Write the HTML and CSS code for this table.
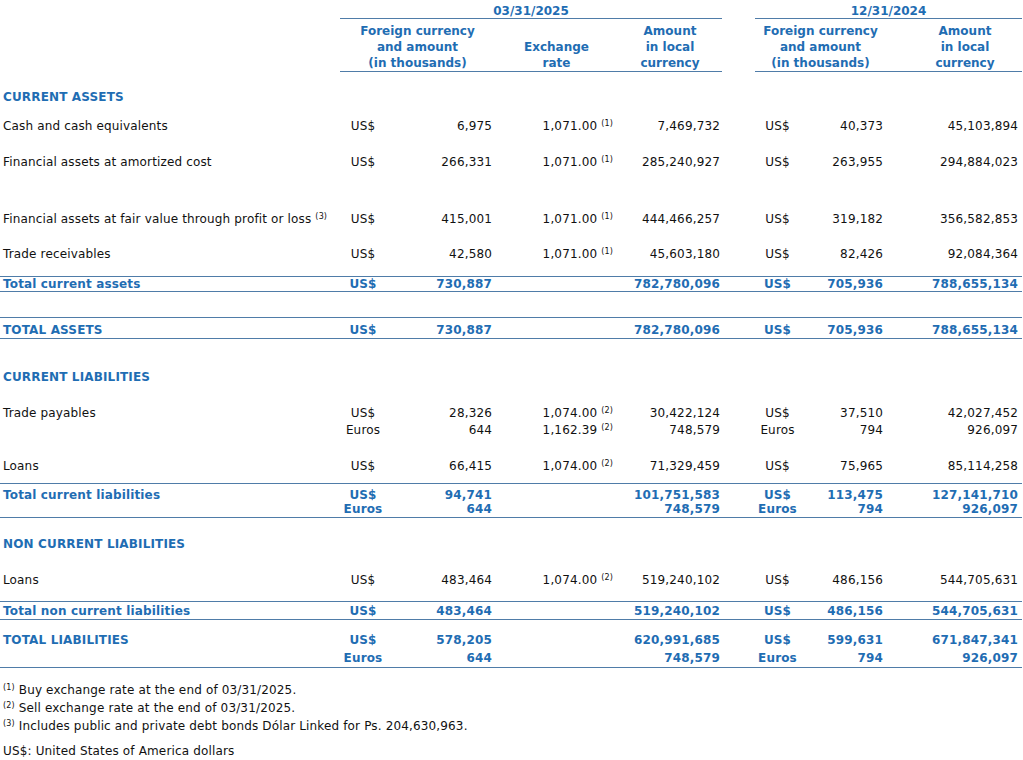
FILE: index.html
```html
<!DOCTYPE html>
<html>
  <head>
    <meta charset="utf-8" />
    <title>Foreign currency assets and liabilities</title>
    <link rel="stylesheet" href="styles.css">
  </head>

  <body>
    <table class="report">
      <colgroup>
        <col class="w-lbl" />
        <col class="w-cur1" />
        <col class="w-amt1" />
        <col class="w-rate" />
        <col class="w-loc1" />
        <col class="w-gap" />
        <col class="w-cur2" />
        <col class="w-amt2" />
        <col class="w-loc2" />
      </colgroup>
      <thead>
        <tr class="date-row">
          <th class="blank"></th>
          <th colspan="4" class="ruled">03/31/2025</th>
          <th class="blank"></th>
          <th colspan="3" class="ruled">12/31/2024</th>
        </tr>
        <tr class="head-row">
          <th class="blank"></th>
          <th colspan="2" class="ruled">Foreign currency<br>and amount<br>(in thousands)</th>
          <th class="ruled">Exchange<br>rate</th>
          <th class="ruled">Amount<br>in local<br>currency</th>
          <th class="blank"></th>
          <th colspan="2" class="ruled">Foreign currency<br>and amount<br>(in thousands)</th>
          <th class="ruled shift">Amount<br>in local<br>currency</th>
        </tr>
      </thead>
      <tbody>
        <tr class="sec r-first">
          <td class="lbl">CURRENT ASSETS</td>
          <td></td><td></td><td></td><td></td><td></td><td></td><td></td><td></td>
        </tr>
        <tr class="r-cash">
          <td class="lbl">Cash and cash equivalents</td>
          <td class="cur">US$</td>
          <td class="num">6,975</td>
          <td class="rate">1,071.00 <sup>(1)</sup></td>
          <td class="loc">7,469,732</td>
          <td></td>
          <td class="cur">US$</td>
          <td class="num">40,373</td>
          <td class="loc2">45,103,894</td>
        </tr>
        <tr class="r-amort">
          <td class="lbl">Financial assets at amortized cost</td>
          <td class="cur">US$</td>
          <td class="num">266,331</td>
          <td class="rate">1,071.00 <sup>(1)</sup></td>
          <td class="loc">285,240,927</td>
          <td></td>
          <td class="cur">US$</td>
          <td class="num">263,955</td>
          <td class="loc2">294,884,023</td>
        </tr>
        <tr class="r-fv">
          <td class="lbl">Financial assets at fair value through profit or loss <sup>(3)</sup></td>
          <td class="cur">US$</td>
          <td class="num">415,001</td>
          <td class="rate">1,071.00 <sup>(1)</sup></td>
          <td class="loc">444,466,257</td>
          <td></td>
          <td class="cur">US$</td>
          <td class="num">319,182</td>
          <td class="loc2">356,582,853</td>
        </tr>
        <tr class="r-rec">
          <td class="lbl">Trade receivables</td>
          <td class="cur">US$</td>
          <td class="num">42,580</td>
          <td class="rate">1,071.00 <sup>(1)</sup></td>
          <td class="loc">45,603,180</td>
          <td></td>
          <td class="cur">US$</td>
          <td class="num">82,426</td>
          <td class="loc2">92,084,364</td>
        </tr>
        <tr class="total boxed">
          <td class="lbl">Total current assets</td>
          <td class="cur">US$</td>
          <td class="num">730,887</td>
          <td class="rate"></td>
          <td class="loc">782,780,096</td>
          <td></td>
          <td class="cur">US$</td>
          <td class="num">705,936</td>
          <td class="loc2">788,655,134</td>
        </tr>
        <tr class="spacer">
          <td></td><td></td><td></td><td></td><td></td><td></td><td></td><td></td><td></td>
        </tr>
        <tr class="total boxed r-tassets">
          <td class="lbl">TOTAL ASSETS</td>
          <td class="cur">US$</td>
          <td class="num">730,887</td>
          <td class="rate"></td>
          <td class="loc">782,780,096</td>
          <td></td>
          <td class="cur">US$</td>
          <td class="num">705,936</td>
          <td class="loc2">788,655,134</td>
        </tr>
        <tr class="sec r-cl">
          <td class="lbl">CURRENT LIABILITIES</td>
          <td></td><td></td><td></td><td></td><td></td><td></td><td></td><td></td>
        </tr>
        <tr class="r-pay">
          <td class="lbl">Trade payables</td>
          <td class="cur">US$<br>Euros</td>
          <td class="num">28,326<br>644</td>
          <td class="rate">1,074.00 <sup>(2)</sup><br>1,162.39 <sup>(2)</sup></td>
          <td class="loc">30,422,124<br>748,579</td>
          <td></td>
          <td class="cur">US$<br>Euros</td>
          <td class="num">37,510<br>794</td>
          <td class="loc2">42,027,452<br>926,097</td>
        </tr>
        <tr class="r-loans">
          <td class="lbl">Loans</td>
          <td class="cur">US$</td>
          <td class="num">66,415</td>
          <td class="rate">1,074.00 <sup>(2)</sup></td>
          <td class="loc">71,329,459</td>
          <td></td>
          <td class="cur">US$</td>
          <td class="num">75,965</td>
          <td class="loc2">85,114,258</td>
        </tr>
        <tr class="total boxed r-tcl">
          <td class="lbl">Total current liabilities</td>
          <td class="cur">US$<br>Euros</td>
          <td class="num">94,741<br>644</td>
          <td class="rate"></td>
          <td class="loc">101,751,583<br>748,579</td>
          <td></td>
          <td class="cur">US$<br>Euros</td>
          <td class="num">113,475<br>794</td>
          <td class="loc2">127,141,710<br>926,097</td>
        </tr>
        <tr class="sec r-ncl">
          <td class="lbl">NON CURRENT LIABILITIES</td>
          <td></td><td></td><td></td><td></td><td></td><td></td><td></td><td></td>
        </tr>
        <tr class="r-loans2">
          <td class="lbl">Loans</td>
          <td class="cur">US$</td>
          <td class="num">483,464</td>
          <td class="rate">1,074.00 <sup>(2)</sup></td>
          <td class="loc">519,240,102</td>
          <td></td>
          <td class="cur">US$</td>
          <td class="num">486,156</td>
          <td class="loc2">544,705,631</td>
        </tr>
        <tr class="total boxed r-tncl">
          <td class="lbl">Total non current liabilities</td>
          <td class="cur">US$</td>
          <td class="num">483,464</td>
          <td class="rate"></td>
          <td class="loc">519,240,102</td>
          <td></td>
          <td class="cur">US$</td>
          <td class="num">486,156</td>
          <td class="loc2">544,705,631</td>
        </tr>
        <tr class="total underlined r-tliab">
          <td class="lbl">TOTAL LIABILITIES</td>
          <td class="cur">US$<br>Euros</td>
          <td class="num">578,205<br>644</td>
          <td class="rate"></td>
          <td class="loc">620,991,685<br>748,579</td>
          <td></td>
          <td class="cur">US$<br>Euros</td>
          <td class="num">599,631<br>794</td>
          <td class="loc2">671,847,341<br>926,097</td>
        </tr>
      </tbody>
    </table>

    <div class="notes">
      <p><sup>(1)</sup> Buy exchange rate at the end of 03/31/2025.</p>
      <p><sup>(2)</sup> Sell exchange rate at the end of 03/31/2025.</p>
      <p><sup>(3)</sup> Includes public and private debt bonds Dólar Linked for Ps. 204,630,963.</p>
      <p class="legend">US$: United States of America dollars</p>
    </div>
  </body>
</html>
```

FILE: styles.css
```css
body {
  margin: 0;
  font-family: "DejaVu Sans", Verdana, sans-serif;
  font-size: 12px;
  color: #111;
  background-color: #fff;
}

.report {
  width: 1022px;
  table-layout: fixed;
  border-collapse: separate;
  border-spacing: 0;
}

.w-lbl { width: 340px; }
.w-cur1 { width: 46px; }
.w-amt1 { width: 109px; }
.w-rate { width: 123px; }
.w-loc1 { width: 104px; }
.w-gap { width: 33px; }
.w-cur2 { width: 45px; }
.w-amt2 { width: 86px; }
.w-loc2 { width: 136px; }

th,
td {
  padding: 0;
  line-height: 14px;
  vertical-align: top;
  white-space: nowrap;
}

td {
  letter-spacing: 0.15px;
}

th {
  color: #1f6db3;
  font-weight: bold;
  text-align: center;
}

.ruled {
  border-bottom: 1px solid #4f7ca8;
}

.date-row th {
  padding: 4px 0 0;
}

.head-row th {
  line-height: 16px;
  padding-top: 4px;
  vertical-align: bottom;
}

.head-row .shift {
  padding-left: 22px;
}

sup {
  font-size: 8px;
  line-height: 0;
  vertical-align: 4px;
}

.lbl {
  padding-left: 3px;
}

.cur {
  text-align: center;
}

.num {
  text-align: right;
  padding-right: 3px;
}

.rate {
  text-align: right;
  padding-right: 5px;
}

.loc {
  text-align: right;
  padding-right: 2px;
}

.loc2 {
  text-align: right;
  padding-right: 4px;
}

.sec .lbl {
  color: #1f6db3;
  font-weight: bold;
}

.total td {
  color: #1f6db3;
  font-weight: bold;
}

.boxed td {
  border-top: 1px solid #4f7ca8;
  border-bottom: 1px solid #4f7ca8;
}

.underlined td {
  border-bottom: 1px solid #4f7ca8;
}

/* row spacing, measured from the statement */
.r-first td { padding-top: 18px; padding-bottom: 14px; }
.r-cash td { padding-top: 1px; padding-bottom: 21px; }
.r-amort td { padding-top: 1px; padding-bottom: 42px; }
.r-fv td { padding-top: 1px; padding-bottom: 20px; }
.r-rec td { padding-top: 1px; padding-bottom: 15px; }
.spacer td { height: 25px; }
.r-tassets td { padding-top: 5px; padding-bottom: 1px; }
.r-cl td { padding-top: 31px; padding-bottom: 20px; }
.r-pay td { line-height: 17px; padding-top: 1px; padding-bottom: 19px; }
.r-loans td { padding-top: 1px; padding-bottom: 10px; }
.r-tcl td { padding-top: 4px; padding-bottom: 1px; }
.r-ncl td { padding-top: 19px; padding-bottom: 21px; }
.r-loans2 td { padding-top: 1px; padding-bottom: 14px; }
.r-tncl td { padding-top: 2px; padding-bottom: 1px; }
.r-tliab td { line-height: 18px; padding-top: 11px; padding-bottom: 0; }

.notes {
  margin-top: 13px;
  padding-left: 3px;
  line-height: 18px;
  letter-spacing: 0.15px;
}

.notes p {
  margin: 0;
}

.notes .legend {
  margin-top: 7px;
}
```
